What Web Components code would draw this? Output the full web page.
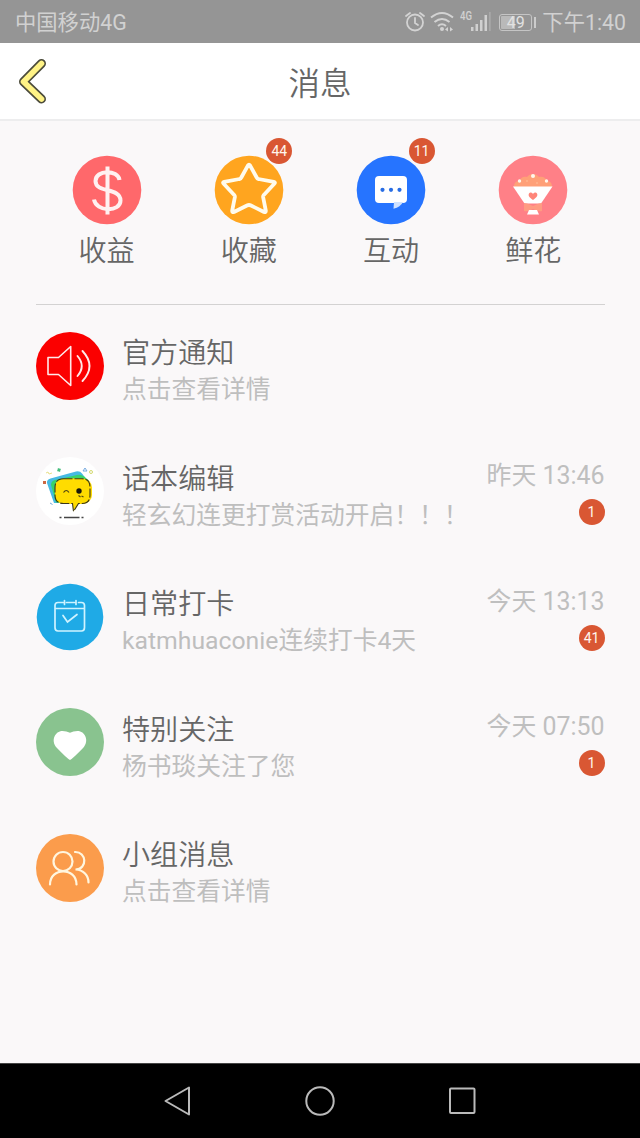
<!DOCTYPE html>
<html lang="zh-CN">
<head>
<meta charset="utf-8">
<title>消息</title>
<style>
html,body{margin:0;height:100%}
body{background:#faf8f9;font-family:Roboto,"Noto Sans CJK SC",sans-serif;font-weight:400;overflow:hidden}
</style>
</head>
<body>
<message-screen></message-screen>
<script>
const icons = {
dollar:`<circle cx="34" cy="34" r="34.3" fill="#ff686b"/><path d="M46.500 24C45 13.500 22.500 13.500 22.500 25c0 12.500 25 6 25 19.500C47.500 56.500 23 56 21 43.500M34.500 10.500v48" fill="none" stroke="#fff1f1" stroke-width="4"/>`,
star:`<circle cx="34" cy="34" r="34.300" fill="#ffa51f"/><path d="M33 9.300Q34 7.800 35 9.300L41.700 21.500Q42.200 22.800 43.500 23L58.800 25.800Q60.700 26.300 59.300 27.700L48.800 39Q48 40 48.100 41L50.800 54.700Q51 56.700 49 56L36 49.500Q34 48.500 32 49.500L19 56Q17 56.700 17.200 54.700L19.900 41Q20 40 19.200 39L8.700 27.700Q7.300 26.300 9.200 25.800L24.500 23Q25.800 22.800 26.300 21.500Z" fill="none" stroke="#fffbed" stroke-width="3.800" stroke-linejoin="round"/>`,
chat:`<circle cx="34" cy="34" r="34.300" fill="#2674ff"/><rect x="18" y="20" width="32" height="27" rx="4" fill="#fff"/><path d="M37 46h9q-2.500 5-9.500 6.800z" fill="#cfe2ff"/><g fill="#286de4"><circle cx="25.500" cy="33.800" r="2.100"/><circle cx="34" cy="33.800" r="2.100"/><circle cx="42.500" cy="33.800" r="2.100"/></g>`,
flower:`<circle cx="34" cy="34" r="34.300" fill="#ff8087"/><path d="M15 31c0-4 2-6 5-6 2-4 5-5 8-4 3-4 9-4 12 0 4-1 7 1 8 4 3 0 5 2 5 6z" fill="#ffa078"/><g fill="#fff7ec"><circle cx="34" cy="20" r="2"/><circle cx="20.500" cy="25" r="1.700"/><circle cx="47.500" cy="25" r="1.700"/></g><g fill="#ffb68e"><circle cx="28" cy="25" r="1"/><circle cx="38" cy="27" r="1"/></g><path d="M14 30.500H53.500L42 47.500H25.500Z" fill="#fff"/><path d="M34 44c-4-3-5-4.500-4-6.500 1-1.500 3-1 4 .5 1-1.500 3-2 4-.5 1 2 0 3.500-4 6.500z" fill="#ff8579"/><path d="M25 47q3 0 9 3 6-3 9-3v8q-4 1-9-2-5 3-9 2z" fill="#ff9b82"/><path d="M30 54h8l2 4.500H28z" fill="#fff"/>`,
speaker:`<circle cx="34" cy="34" r="34" fill="#fb0000"/><g fill="none" stroke="#ffe9e9" stroke-width="1.600" stroke-linejoin="round" stroke-linecap="round"><path d="M12 25.500H22.500L34.700 14.500V53.500L22.500 42.500H12Z"/><path d="M41.500 24Q50 34 41.500 44M46.500 19Q60.500 34 46.500 49" stroke-width="1.900"/></g>`,
editor:`<circle cx="34" cy="34" r="34" fill="#fff"/><path d="M11 26q-.5-3.500 3.500-4.500L40 14.500q4-.8 6 2L51 23 46 46H18Z" fill="#45b9e2"/><path d="M15 28q0-4 4-5l22-5q4-.8 7 1.500l5 4-5 22H20Z" fill="#37d269"/><rect x="21" y="21.500" width="35" height="25.500" rx="9" fill="#ffdc00"/><path d="M27.500 21.800H46Q54 21.800 54 30.500V38Q54 46.500 46 46.500H42.500L37.500 54.500 36.500 46.500H27.500Q19 46.500 19 38V30.500Q19 21.800 27.500 21.800Z" fill="#ffdc00" stroke="#3a361c" stroke-width="1.100" stroke-dasharray="9 2"/><circle cx="43" cy="34" r="2.700" fill="#19170b"/><path d="M27.500 35.500q2.800-4 5.500 0M42.500 38.500l2 1.500m1-1l2 1" fill="none" stroke="#514612" stroke-width="1.200"/><path d="M23.500 60.500h2M28 60.500h15.500M45.500 60.500h2" stroke="#454545" stroke-width="1.300"/><path d="M22 11.500l2 3M21.500 14l3-2" stroke="#45be7c" stroke-width="1.600"/><path d="M10 16l2-1 1 2 3-1" stroke="#e8e08a" fill="none"/><circle cx="55" cy="15" r="1.500" fill="none" stroke="#d4da6f"/><path d="M47 14l2-3 2 3zM14 46l2.500 1.500" fill="none" stroke="#75aae0"/><path d="M7 24h3v3H7z" fill="#cc6842"/>`,
calendar:`<circle cx="34" cy="34" r="33.300" fill="#1faae6"/><g fill="none" stroke="#cff3ff" stroke-width="1.700" stroke-linecap="round"><path d="M27 19.500h-5q-3 0-3 3v22q0 3.500 3 3.500h23.500q3 0 3-3.500V22.500q0-3-3-3h-3M30.500 19.500h8M19 25.500h29.500M28.500 17.500v4M40 17.500v4"/><path d="M27 32.500l4.500 6.500 9.500-7.500" stroke-width="1.700"/></g>`,
heart:`<circle cx="34" cy="34" r="34" fill="#89c38f"/><path d="M34 52Q31 50.500 20.500 39.500C14.500 32.500 19 23 26.500 23q4 0 7.500 1.700Q37 23 41.500 23C49 23 53.500 32.500 47.500 39.500Q37 50.500 34 52Z" fill="#fff"/>`,
people:`<circle cx="34" cy="34" r="34" fill="#fb9c4c"/><g fill="none" stroke="#fff6df" stroke-width="2.200" stroke-linecap="round"><circle cx="27" cy="27.500" r="9.500"/><path d="M14 50.500c0-17.500 26.500-17.500 26.500 0M39 18c11.500-.5 13 17 .5 17.500C47.500 36 52.500 41.500 52.500 48.500"/></g>`
};
function define(name, css, html) {
  customElements.define(name, class extends HTMLElement {
    connectedCallback() {
      if (this.shadowRoot) return;
      const root = this.attachShadow({mode: 'open'});
      root.innerHTML = `<style>:host{display:block;box-sizing:border-box}*{box-sizing:border-box}svg{display:block}${css}</style>${typeof html === 'function' ? html(this) : html}`;
    }
  });
}
define('round-icon', ':host{width:68px;height:68px;flex:none}svg{overflow:visible}', e => `<svg width="68" height="68" viewBox="0 0 68 68">${icons[e.getAttribute('name')]}</svg>`);
define('count-badge', ':host{display:flex;width:26px;height:26px;border-radius:50%;background:#d95733;color:#fff6ee;font:400 14px/26px Roboto,sans-serif;justify-content:center}', '<slot></slot>');
define('status-bar', `:host{height:42.500px;background:#959595;color:#d1d1d1;display:flex;align-items:center;padding:2px 14px 0 15px;font-size:21.300px;line-height:30px;justify-content:space-between;white-space:nowrap}svg{flex:none}span{padding-top:2px}.right{display:flex;align-items:center}.net{position:relative;width:39px;height:24px}.net b{position:absolute;left:5px;top:0;font:500 12px/12px Roboto;transform:scaleX(.8);transform-origin:0 0}.bat{width:33px;height:17px;border:1.300px solid #c5c5c5;border-radius:3px;font:400 16px/13px Roboto;text-align:center;background:linear-gradient(90deg,#b9b9b9 0 48%,transparent 48%);background-clip:content-box;padding:1px;color:#e2e2e2}.tip{width:2px;height:11px;background:#ccc;margin:0 6.500px 0 1.500px}`, `<span>中国移动4G</span><div class="right"><svg width="22" height="22" viewBox="0 0 22 22" fill="none" stroke="#d3d3d3" stroke-width="1.800" stroke-linecap="round"><circle cx="11" cy="11.500" r="8"/><path d="M11 7v5l3 2M2 5l4-3M20 5l-4-3"/></svg><svg style="margin-left:3px" width="26" height="22" viewBox="0 0 26 22" fill="none" stroke="#d3d3d3" stroke-width="2"><path d="M2 6.500q11-9 22 0M5.500 11q7.500-6 15 0M9 15q4-3.500 8 0"/><circle cx="13" cy="18" r="1" fill="#d3d3d3"/><path d="M19 16l-3 2.500 3 2zM21 16l3 2.500-3 2z" fill="#d3d3d3" stroke="none"/></svg><div class="net"><b>4G</b><svg width="39" height="24" viewBox="0 0 39 24" fill="#d0d0d0"><path d="M16 17h2.500v4H16zM20.500 14H23v7h-2.500zM25 10h2.500v11H25zM29.500 5H32v16h-2.500z"/><path d="M34 2h1.800v19H34z" fill="#a8a8a8"/></svg></div><div style="width:5px"></div><div class="bat">49</div><div class="tip"></div><span>下午1:40</span></div>`);
define('title-bar', `:host{height:78px;background:#fff;border-bottom:2px solid #ededee;display:grid;grid-template-columns:60px 1fr 60px;align-items:center;color:#666;font-size:31.500px;line-height:44px;text-align:center;font-weight:350}svg{margin-left:18px;overflow:visible}.title{padding-top:8px}`, `<svg width="30" height="46" viewBox="0 0 30 46" fill="none" stroke-linecap="round" stroke-linejoin="round"><path d="M23.500 5.500L5.500 23.700 23.500 41" stroke="#4c4c3b" stroke-width="9"/><path d="M23.500 5.500L5.500 23.700 23.500 41" stroke="#fff386" stroke-width="5.600"/></svg><div class="title"><slot></slot></div>`);
define('quick-link', `:host{display:flex;flex-direction:column;align-items:center;color:#666;font-size:28.100px;line-height:40px;font-weight:350}.icon{position:relative}count-badge{position:absolute;left:51.500px;top:-18px}.label{margin-top:8px}`, e => `<div class="icon"><round-icon name="${e.getAttribute('icon')}"></round-icon>${e.hasAttribute('count') ? `<count-badge>${e.getAttribute('count')}</count-badge>` : ''}</div><div class="label"><slot></slot></div>`);
define('quick-links', `:host{display:grid;grid-template-columns:repeat(4,1fr);margin:0 35.500px;padding-top:35.800px;height:184px;border-bottom:1px solid #d3d2d2}`, '<slot></slot>');
define('message-row', `:host{display:flex;height:68px}.text{margin:4.500px 0 0 18.500px;flex:1;white-space:nowrap}.title{font-size:28.100px;line-height:36px;color:#666;font-weight:350}.sub{font-size:24.750px;line-height:36px;color:#bebebe}.meta{display:flex;flex-direction:column;align-items:flex-end;font-size:24.900px;line-height:36px;color:#bfbfbf;padding-top:1px}count-badge{margin-top:5px}`, e => `<round-icon name="${e.getAttribute('icon')}"></round-icon><div class="text"><div class="title"><slot name="title"></slot></div><div class="sub"><slot></slot></div></div><div class="meta"><slot name="time"></slot>${e.hasAttribute('count') ? `<count-badge>${e.getAttribute('count')}</count-badge>` : ''}</div>`);
define('message-list', ':host{display:flex;flex-direction:column;gap:57.600px;padding:27px 35.500px 0;flex:1}', '<slot></slot>');
define('nav-bar', ':host{height:75px;background:#000;border-top:1px solid #444;display:grid;grid-template-columns:repeat(3,142px);justify-content:center;justify-items:center;align-items:center}', `<svg width="30" height="32" viewBox="0 0 30 32" fill="none" stroke="#bababa" stroke-width="2" stroke-linejoin="round"><path d="M26 2.500v27L2.500 16z"/></svg><svg width="32" height="32" viewBox="0 0 32 32" fill="none" stroke="#bababa" stroke-width="2"><circle cx="16" cy="16" r="13.700"/></svg><svg width="28" height="28" viewBox="0 0 28 28" fill="none" stroke="#bababa" stroke-width="2"><rect x="2" y="1.500" width="24.500" height="24.500" rx="1"/></svg>`);
define('message-screen', ':host{display:flex;flex-direction:column;width:640px;height:1138px;background:#faf8f9}status-bar,title-bar,quick-links,nav-bar{flex:none}', `<status-bar></status-bar><title-bar>消息</title-bar><quick-links><quick-link icon="dollar">收益</quick-link><quick-link icon="star" count="44">收藏</quick-link><quick-link icon="chat" count="11">互动</quick-link><quick-link icon="flower">鲜花</quick-link></quick-links><message-list><message-row icon="speaker"><span slot="title">官方通知</span>点击查看详情</message-row><message-row icon="editor" count="1"><span slot="title">话本编辑</span>轻玄幻连更打赏活动开启！！！<span slot="time">昨天 13:46</span></message-row><message-row icon="calendar" count="41"><span slot="title">日常打卡</span>katmhuaconie连续打卡4天<span slot="time">今天 13:13</span></message-row><message-row icon="heart" count="1"><span slot="title">特别关注</span>杨书琰关注了您<span slot="time">今天 07:50</span></message-row><message-row icon="people"><span slot="title">小组消息</span>点击查看详情</message-row></message-list><nav-bar></nav-bar>`);
</script>
</body>
</html>
